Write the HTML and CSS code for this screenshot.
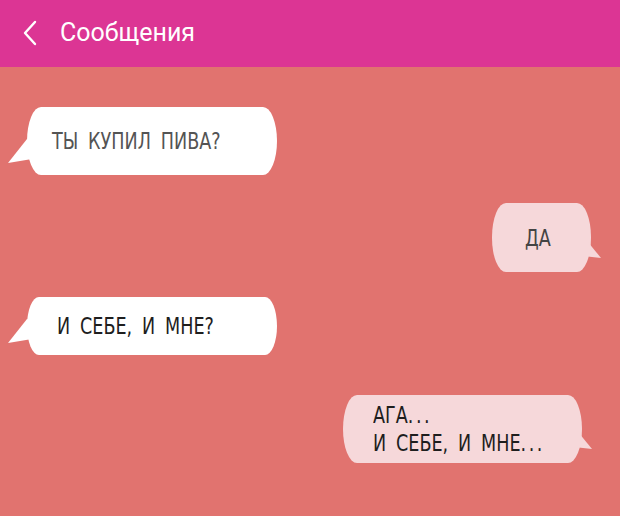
FILE: index.html
```html
<!DOCTYPE html>
<html lang="ru">
<head>
    <meta charset="UTF-8">
    <meta name="viewport" content="width=device-width, initial-scale=1.0">
    <title>Сообщения</title>
    <link rel="stylesheet" href="styles.css">
</head>
<body>
    <div class="screen">
        <!-- Top bar -->
        <div class="topbar">
            <svg class="back" width="14" height="26" viewBox="0 0 14 26">
                <path d="M12 2 L2 13 L12 24" fill="none" stroke="#fff" stroke-width="2.4" stroke-linecap="round" stroke-linejoin="round"/>
            </svg>
            <span class="title">Сообщения</span>
        </div>

        <!-- Conversation -->
        <div class="chat">
            <div class="row in first">
                <div class="bubble b1"><span class="txt">ТЫ КУПИЛ ПИВА?</span></div>
            </div>
            <div class="row out second">
                <div class="bubble b2"><span class="txt">ДА</span></div>
            </div>
            <div class="row in third">
                <div class="bubble b3"><span class="txt">И СЕБЕ, И МНЕ?</span></div>
            </div>
            <div class="row out fourth">
                <div class="bubble b4"><span class="txt">АГА<span class="dots">...</span><br>И СЕБЕ, И МНЕ<span class="dots">...</span></span></div>
            </div>
        </div>
    </div>
</body>
</html>
```

FILE: styles.css
```css
body {
    margin: 0;
    font-family: Roboto, "Liberation Sans", sans-serif;
}

.screen {
    width: 620px;
    height: 516px;
    background: #e1736f;
    overflow: hidden;
}

.topbar {
    height: 67px;
    background: #dc3594;
    display: flex;
    align-items: center;
    padding-left: 23px;
    gap: 23px;
}

.back {
    margin-top: -1px;
}

.title {
    color: #fff;
    font-size: 25px;
    margin-top: -2px;
}

.chat {
    display: flex;
    flex-direction: column;
}

.row {
    display: flex;
}

.row.in {
    justify-content: flex-start;
    padding-left: 27px;
}

.row.out {
    justify-content: flex-end;
}

.first { margin-top: 40px; }
.second { margin-top: 28px; padding-right: 29px; }
.third { margin-top: 25px; }
.fourth { margin-top: 40px; padding-right: 38px; }

.bubble {
    position: relative;
    display: flex;
    align-items: center;
    font-family: "DejaVu Sans Condensed", "DejaVu Sans", sans-serif;
    font-size: 23px;
    word-spacing: 5px;
    border-radius: 14px / 34px;
    box-sizing: border-box;
}

/* the hand-lettered look is narrower than any installed face */
.txt {
    display: inline-block;
    transform: scaleX(0.85);
    transform-origin: left center;
    white-space: nowrap;
}

.dots {
    letter-spacing: 3px;
}

.in .bubble {
    background: #fff;
}

.out .bubble {
    background: #f6d8da;
}

/* speech tails */
.bubble::after {
    content: "";
    position: absolute;
    width: 26px;
    height: 26px;
    background: inherit;
}

.in .bubble::after {
    left: -19px;
    bottom: 10px;
    clip-path: polygon(19px 0, 0 24px, 24px 20px, 26px 2px);
}

.out .bubble::after {
    right: -18px;
    bottom: 10px;
    clip-path: polygon(0 0, 18px 22px, 0 20px);
}

.b1 {
    width: 250px;
    height: 68px;
    padding-left: 25px;
    color: #545454;
}

.b2 {
    width: 99px;
    height: 69px;
    padding-left: 33px;
    color: #444;
}

.b3 {
    width: 250px;
    height: 58px;
    padding-left: 30px;
    color: #1e1e1e;
}

.b4 {
    width: 239px;
    height: 68px;
    padding-left: 30px;
    line-height: 28px;
    color: #1e1e1e;
}
```
